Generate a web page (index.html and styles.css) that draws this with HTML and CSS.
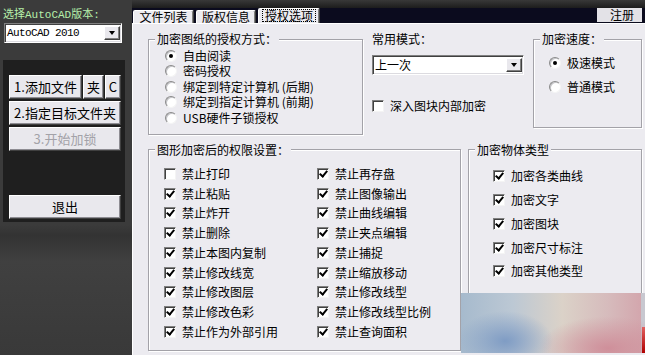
FILE: index.html
```html
<!DOCTYPE html>
<html>
  <head>
    <meta charset="UTF-8" />
    <title>CAD 图纸加密</title>
    <link rel="stylesheet" href="styles.css">
  </head>
  <body>
    <div class="sidebar">
      <div class="version-label">选择AutoCAD版本:</div>
      <div class="combo version-combo">
        <span class="combo-text mono">AutoCAD 2010</span>
        <span class="combo-button"></span>
      </div>

      <div class="action-panel">
        <div class="button-row">
          <button class="button add-button">1.添加文件</button>
          <button class="button small-button">夹</button>
          <button class="button small-button narrow">C</button>
        </div>
        <button class="button">2.指定目标文件夹</button>
        <button class="button" disabled>3.开始加锁</button>
        <button class="button exit-button">退出</button>
      </div>
    </div>

    <div class="main">
      <div class="tab-bar">
        <div class="tab">文件列表</div>
        <div class="tab">版权信息</div>
        <div class="tab tab-active"><span class="focus">授权选项</span></div>
        <button class="register-button">注册</button>
      </div>

      <div class="tab-panel">
        <div class="top-row">
          <fieldset class="group auth-group">
            <legend>加密图纸的授权方式：</legend>
            <div class="group-body">
              <label class="option"><span class="radio checked"></span>自由阅读</label>
              <label class="option"><span class="radio"></span>密码授权</label>
              <label class="option"><span class="radio"></span>绑定到特定计算机 (后期)</label>
              <label class="option"><span class="radio"></span>绑定到指定计算机 (前期)</label>
              <label class="option"><span class="radio"></span>USB硬件子锁授权</label>
            </div>
          </fieldset>

          <div class="mode-column">
            <div class="mode-label">常用模式：</div>
            <div class="combo mode-combo">
              <span class="combo-text">上一次</span>
              <span class="combo-button"></span>
            </div>
            <label class="option deep-option"><span class="check"></span>深入图块内部加密</label>
          </div>

          <fieldset class="group speed-group">
            <legend>加密速度：</legend>
            <div class="group-body">
              <label class="option"><span class="radio checked"></span>极速模式</label>
              <label class="option"><span class="radio"></span>普通模式</label>
            </div>
          </fieldset>
        </div>

        <div class="bottom-row">
          <fieldset class="group perm-group">
            <legend>图形加密后的权限设置：</legend>
            <div class="group-body perm-grid">
              <label class="option"><span class="check"></span>禁止打印</label>
              <label class="option"><span class="check checked"></span>禁止粘贴</label>
              <label class="option"><span class="check checked"></span>禁止炸开</label>
              <label class="option"><span class="check checked"></span>禁止删除</label>
              <label class="option"><span class="check checked"></span>禁止本图内复制</label>
              <label class="option"><span class="check checked"></span>禁止修改线宽</label>
              <label class="option"><span class="check checked"></span>禁止修改图层</label>
              <label class="option"><span class="check checked"></span>禁止修改色彩</label>
              <label class="option"><span class="check checked"></span>禁止作为外部引用</label>
              <label class="option"><span class="check checked"></span>禁止再存盘</label>
              <label class="option"><span class="check checked"></span>禁止图像输出</label>
              <label class="option"><span class="check checked"></span>禁止曲线编辑</label>
              <label class="option"><span class="check checked"></span>禁止夹点编辑</label>
              <label class="option"><span class="check checked"></span>禁止捕捉</label>
              <label class="option"><span class="check checked"></span>禁止缩放移动</label>
              <label class="option"><span class="check checked"></span>禁止修改线型</label>
              <label class="option"><span class="check checked"></span>禁止修改线型比例</label>
              <label class="option"><span class="check checked"></span>禁止查询面积</label>
            </div>
          </fieldset>

          <fieldset class="group type-group">
            <legend>加密物体类型</legend>
            <div class="group-body">
              <label class="option"><span class="check checked"></span>加密各类曲线</label>
              <label class="option"><span class="check checked"></span>加密文字</label>
              <label class="option"><span class="check checked"></span>加密图块</label>
              <label class="option"><span class="check checked"></span>加密尺寸标注</label>
              <label class="option"><span class="check checked"></span>加密其他类型</label>
            </div>
          </fieldset>
        </div>
      </div>

      <div class="watermark"></div>
    </div>
  </body>
</html>
```

FILE: styles.css
```css
:root {
  /* classic window colors */
  --panel-bg: #ecebf0;
  --face: #e9e8ed;
  --highlight: #ffffff;
  --shadow: #808080;
  --dark-shadow: #404040;
  --etch: #a3a2a8;
  --sidebar-bg: #3a3a3a;
  --tab-bar-bg: #0b0b1e;
}

* {
  box-sizing: border-box;
}

body {
  margin: 0;
  width: 645px;
  height: 355px;
  display: flex;
  overflow: hidden;
  background-color: var(--sidebar-bg);
  font-family: "Noto Sans CJK SC", sans-serif;
  font-size: 12px;
  line-height: 14px;
  color: #000;
}

.mono {
  font-family: "Liberation Mono", "Noto Sans CJK SC", monospace;
}

/* Sidebar */

.sidebar {
  width: 132px;
  flex-shrink: 0;
  padding-top: 8px;
  background: linear-gradient(
    #3b3b3b 0,
    #3b3b3b 225px,
    #333333 235px,
    #404040 262px,
    #393939 100%
  );
}

.version-label {
  padding-left: 3px;
  font-family: "Liberation Mono", "Noto Sans CJK SC", monospace;
  font-size: 11px;
  line-height: 14px;
  color: #b6efaa;
}

.combo {
  display: flex;
  align-items: center;
  justify-content: space-between;
  height: 20px;
  padding: 1px 1px 1px 2px;
  background-color: #fff;
  border: 1px solid;
  border-color: var(--shadow) var(--highlight) var(--highlight) var(--shadow);
  box-shadow: inset 1px 1px 0 var(--dark-shadow),
    inset -1px -1px 0 #dcdbe0;
}

.version-combo {
  width: 118px;
  margin: 1px 0 0 4px;
}

.combo-text {
  font-size: 12px;
  line-height: 14px;
}

.version-combo .combo-text {
  font-size: 11px;
  letter-spacing: -0.6px;
}

.combo-button {
  width: 16px;
  height: 14px;
  display: flex;
  align-items: center;
  justify-content: center;
  background-color: var(--face);
  border: 1px solid;
  border-color: var(--highlight) var(--dark-shadow) var(--dark-shadow) var(--highlight);
  box-shadow: inset -1px -1px 0 var(--shadow);
}

.combo-button::after {
  content: "";
  border-style: solid;
  border-width: 4px 3.5px 0;
  border-color: #000 transparent transparent;
}

.action-panel {
  display: flex;
  flex-direction: column;
  gap: 2px;
  width: 122px;
  height: 162px;
  margin: 17px 0 0 3px;
  padding: 15px 4px 0 6px;
  background-color: #1f1f1f;
}

.button-row {
  display: flex;
  gap: 1px;
}

.button {
  height: 24px;
  padding: 0;
  font-family: "Noto Sans CJK SC", sans-serif;
  font-size: 13px;
  line-height: 16px;
  color: #000;
  background-color: var(--face);
  border: 1px solid;
  border-color: var(--highlight) var(--dark-shadow) var(--dark-shadow) var(--highlight);
  box-shadow: inset -1px -1px 0 #8d8c92;
}

.button:disabled {
  color: #a3a2a8;
}

.add-button {
  width: 73px;
}

.small-button {
  width: 21px;
}

.small-button.narrow {
  width: auto;
  flex: 1;
}

.exit-button {
  margin-top: 42px;
}

/* Main area */

.main {
  flex: 1;
  position: relative;
  display: flex;
  flex-direction: column;
  padding-top: 8px;
  background: linear-gradient(#383838, #1c1c1c 8px);
}

.tab-bar {
  height: 15px;
  display: flex;
  align-items: flex-end;
  gap: 2px;
  padding-left: 1px;
  background-color: var(--tab-bar-bg);
}

.tab {
  width: 61px;
  height: 13px;
  display: flex;
  align-items: center;
  justify-content: center;
  line-height: 12px;
  background-color: var(--panel-bg);
  border: 1px solid;
  border-bottom: none;
  border-color: var(--highlight) var(--dark-shadow) transparent var(--highlight);
  border-radius: 2px 2px 0 0;
  box-shadow: inset -1px 0 0 var(--shadow);
}

.tab + .tab {
  width: 60px;
}

.tab.tab-active {
  width: 62px;
  height: 15px;
  align-items: flex-start;
}

.focus {
  padding: 0 2px;
  line-height: 11px;
  border: 1px dotted #000;
}

.register-button {
  align-self: flex-start;
  width: 45px;
  height: 14px;
  margin-left: auto;
  margin-right: 3px;
  padding: 0 0 0 5px;
  font-family: "Noto Sans CJK SC", sans-serif;
  font-size: 12px;
  line-height: 12px;
  color: #000;
  background-color: #e3e2e7;
  border: none;
}

.tab-panel {
  flex: 1;
  padding: 8px 2px 0 15px;
  background-color: var(--panel-bg);
  border-top: 1px solid var(--highlight);
  border-left: 1px solid var(--highlight);
}

/* Group boxes */

.top-row {
  display: flex;
  align-items: flex-start;
}

.bottom-row {
  display: flex;
  gap: 7px;
  margin-top: 8px;
}

.group {
  margin: 0;
  padding: 0;
  min-width: 0;
  border: 1px solid var(--etch);
  box-shadow: inset 1px 1px 0 var(--highlight), 1px 1px 0 var(--highlight);
}

.group legend {
  margin-left: 6px;
  padding: 0 2px;
  line-height: 14px;
  background-color: var(--panel-bg);
}

.option {
  display: flex;
  align-items: center;
  gap: 6px;
  line-height: 14px;
  white-space: nowrap;
}

.auth-group {
  width: 215px;
}

.auth-group .group-body {
  padding: 2px 0 8px 16px;
}

.auth-group .option {
  height: 15.5px;
}

.mode-column {
  width: 152px;
  margin-left: 9px;
}

.mode-combo {
  margin-top: 9px;
}

.deep-option {
  height: 16px;
  margin-top: 23px;
}

.speed-group {
  width: 109px;
  margin-left: 9px;
}

.speed-group .group-body {
  padding: 5px 0 28px 15px;
}

.speed-group .option {
  height: 24px;
}

.perm-group {
  width: 313px;
}

.perm-grid {
  display: grid;
  grid-template-columns: 153px 1fr;
  grid-template-rows: repeat(9, 19.75px);
  grid-auto-flow: column;
  padding: 7.5px 0 8px 15px;
}

.type-group {
  width: 174px;
}

.type-group .group-body {
  padding: 8px 0 0 24px;
}

.type-group .option {
  height: 23.75px;
}

/* Radio and check marks */

.radio {
  width: 12px;
  height: 12px;
  flex-shrink: 0;
  display: flex;
  align-items: center;
  justify-content: center;
  border-radius: 50%;
  background-color: #fff;
  border: 1px solid;
  border-color: #8a8a8a #f4f4f4 #f4f4f4 #8a8a8a;
  box-shadow: inset 1px 1px 0 #c4c4c8;
}

.radio.checked::after {
  content: "";
  width: 4px;
  height: 4px;
  border-radius: 50%;
  background-color: #000;
}

.check {
  width: 12px;
  height: 12px;
  flex-shrink: 0;
  display: flex;
  align-items: center;
  justify-content: center;
  background-color: #fff;
  border: 1px solid;
  border-color: var(--shadow) #f4f4f4 #f4f4f4 var(--shadow);
  box-shadow: inset 1px 1px 0 var(--dark-shadow);
}

.check.checked::after {
  content: "";
  width: 3px;
  height: 6px;
  margin: -2px 0 0 1px;
  border: solid #000;
  border-width: 0 2px 2px 0;
  transform: rotate(40deg);
}

/* Blurred stamp lying over the lower right corner */

.watermark {
  position: absolute;
  left: 329px;
  top: 293px;
  z-index: 1;
  width: 184px;
  height: 60px;
  display: flex;
  align-items: flex-end;
  justify-content: flex-end;
  background-color: #c8c8d0;
  background-image:
    radial-gradient(ellipse 48px 30px at 24% 80%, #7f9cc4 0%, rgba(127, 156, 196, 0) 100%),
    radial-gradient(ellipse 70px 32px at 80% 92%, #cf8f9a 0%, rgba(207, 143, 154, 0) 100%),
    linear-gradient(to right, #a6bacd 0, #bcc8d4 28%, #dbd2c8 55%, #d6bbbc 80%, #d3a6ad 98%, transparent 98%);
}

.watermark::after {
  content: "";
  width: 3px;
  height: 26px;
  background: linear-gradient(#e06060, #b00000);
}
```
